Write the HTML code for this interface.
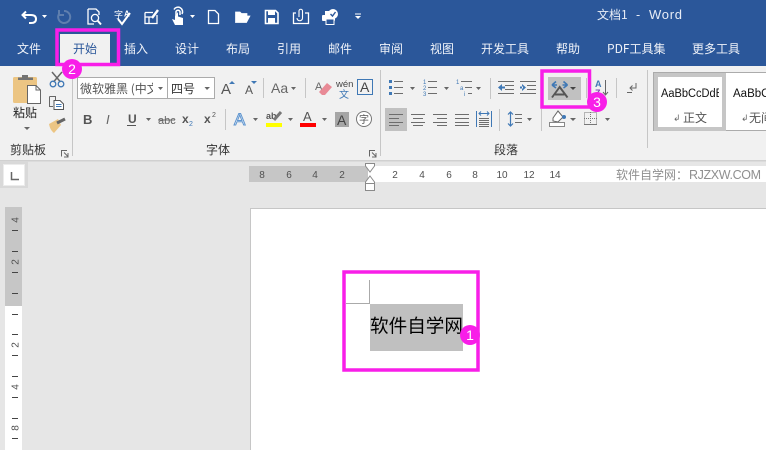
<!DOCTYPE html>
<html lang="zh"><head><meta charset="utf-8"><title>文档1 - Word</title>
<style>
html,body{margin:0;padding:0;width:766px;height:450px;overflow:hidden;background:#e6e6e6}
svg{display:block}
text{font-family:"Liberation Sans","Noto Sans CJK SC",sans-serif}
.cj{font-family:"Noto Sans CJK SC","Liberation Sans",sans-serif;font-size:12px}
.tab{fill:#f0f3f9;font-family:"Noto Sans CJK SC","Liberation Sans",sans-serif;font-size:12px}
.lb{fill:#333;font-family:"Noto Sans CJK SC","Liberation Sans",sans-serif;font-size:12px}
.rn{fill:#505050;font-size:10px;text-anchor:middle}
.w{fill:none;stroke:#fff;stroke-width:1.3}
.g{fill:none;stroke:#666;stroke-width:1}
.b{fill:none;stroke:#3f78b5;stroke-width:1.3}
.ln{stroke:#6d6d6d;stroke-width:1;fill:none}
.sp{stroke:#c6c6c6;stroke-width:1}
.ar{fill:#666}
.m{fill:none;stroke:#f81ee8;stroke-width:3.5}
.bd{fill:#f81ee8}
.bt{fill:#fff;font-size:14px;text-anchor:middle}
</style></head><body>
<svg width="766" height="450" viewBox="0 0 766 450" xmlns="http://www.w3.org/2000/svg">
<rect width="766" height="450" fill="#e6e6e6"/>
<!-- title / tabs -->
<rect width="766" height="66" fill="#2b579a"/>
<rect x="60" y="34" width="50" height="32" fill="#f1f1f1"/>
<!-- ribbon -->
<rect y="66" width="766" height="94" fill="#f1f1f1"/>
<rect y="160" width="766" height="1.5" fill="#d0d0d0"/>

<!-- QAT -->
<path d="M26 11.5 L22.5 15 L26 18.5 M23 15 H31 Q36 15 36 19 Q36 23 31 23 H29" fill="none" stroke="#fff" stroke-width="2"/>
<polygon points="42,15 47,15 44.5,18" fill="#fff"/>
<path d="M64 11 A6 6 0 1 1 59 14 M59 10 V15 H64" fill="none" stroke="#5f7fae" stroke-width="2"/>
<path class="w" d="M88 9 H96 L99 12 V15 M88 9 V24 H94"/>
<circle class="w" cx="95" cy="18" r="3.6" stroke-width="1.6"/><path d="M97.5 20.5 L101 24.5" stroke="#fff" stroke-width="2"/>
<text x="114" y="18" fill="#fff" class="cj" style="font-size:9px">字</text>
<text x="124" y="16.5" fill="#fff" font-size="8" font-weight="bold">A</text>
<path d="M118 19 L122 24 L130 13" fill="none" stroke="#fff" stroke-width="2"/>
<path class="w" d="M145 12.5 H153 M145 12.5 V23.5 H157 V15 M149 23 V17 M145 17 H152"/>
<path d="M152 18 L158 10" stroke="#fff" stroke-width="2.4"/>
<path d="M176 17 V11.5 A2.2 2.2 0 0 1 180 11.5 V15 M174 9.5 A4.5 4.5 0 1 1 182 14" fill="none" stroke="#fff" stroke-width="1.5"/>
<path d="M175 16 V20 L172 19 L175 25 H183 V18 L178 16.5 V12" fill="#fff"/>
<polygon points="190,15 195,15 192.5,18" fill="#fff"/>
<path class="w" d="M208.5 10.5 H215 L218.5 14 V23.5 H208.5 Z"/>
<path d="M235.5 22.5 V12 H240 L241.5 13.5 H247 V16 M235.5 22.5 L239 16 H250 L246.5 22.5 Z" fill="#fff" stroke="#fff" stroke-width=".7"/>
<path d="M265.5 10.5 H275.5 L278 13 V23.5 H265.5 Z" fill="none" stroke="#fff" stroke-width="1.6"/>
<rect x="268" y="11" width="7" height="4" fill="#fff"/><rect x="268" y="18" width="7" height="5" fill="#fff"/>
<path class="w" d="M296 13 H293.500 V23.500 H308.500 V13 H305"/>
<path d="M299 17 V11 A1.7 1.7 0 0 1 302.5 11 V18 A2.6 2.6 0 0 1 297 18" fill="none" stroke="#fff" stroke-width="1.1"/>
<rect x="322" y="15" width="13" height="6" rx="1" fill="#fff"/><rect x="326" y="19" width="8" height="5.5" fill="#2b579a" stroke="#fff"/>
<rect x="325" y="11" width="6" height="4" fill="#fff"/>
<circle cx="333" cy="14" r="5" fill="#fff"/><path d="M330.5 14 L332.5 16 L335.5 12" fill="none" stroke="#2b579a" stroke-width="1.4"/>
<path d="M355 14 H361" stroke="#fff" stroke-width="1"/><polygon points="355,16 361,16 358,19" fill="#fff"/>

<text x="597" y="19" fill="#e8edf6" class="cj" style="font-size:12px">文档1</text>
<text x="636" y="19" fill="#e8edf6" style="font-size:12.5px">-</text>
<text x="649" y="19" fill="#e8edf6" style="font-size:13px" textLength="33">Word</text>

<!-- tabs -->
<text class="tab" x="17" y="53">文件</text>
<text class="tab" x="73" y="53" style="fill:#2b579a">开始</text>
<text class="tab" x="124" y="53">插入</text>
<text class="tab" x="175" y="53">设计</text>
<text class="tab" x="226" y="53">布局</text>
<text class="tab" x="277" y="53">引用</text>
<text class="tab" x="328" y="53">邮件</text>
<text class="tab" x="379" y="53">审阅</text>
<text class="tab" x="430" y="53">视图</text>
<text class="tab" x="481" y="53">开发工具</text>
<text class="tab" x="556" y="53">帮助</text>
<text class="tab" x="607" y="53">PDF工具集</text>
<text class="tab" x="692" y="53">更多工具</text>

<!-- clipboard group -->
<rect x="13" y="77" width="24" height="26" rx="1.5" fill="#ecc583"/>
<path d="M18 80 V77.5 H22 V75 H28 V77.5 H33 V80 Z" fill="#737373"/>
<path d="M27.5 85.5 H36 L40.5 90 V103.5 H27.5 Z" fill="#fff" stroke="#666"/>
<path d="M36 85.5 V90 H40.5" fill="none" stroke="#666"/>
<text class="lb" x="13" y="117" style="fill:#222">粘贴</text>
<polygon points="24,127 30,127 27,130" class="ar"/>
<path d="M52 72 L60.500 82 M62 72 L53.500 82" stroke="#666" stroke-width="1.500"/>
<circle class="b" cx="53" cy="84" r="2.800"/><circle class="b" cx="61" cy="84" r="2.800"/>
<path class="g" d="M49.5 96.5 H55.5 V100 M49.5 96.5 V106.5 H53"/>
<path d="M54 100.5 H60 L63.5 104 V109.5 H54 Z" fill="#fff" stroke="#555"/>
<path d="M56 104.5 H61.5 M56 106.5 H61.5" stroke="#3f78b5"/>
<path d="M49 124 L58 119 L61 125 L54 133 Q50 130 49 124Z" fill="#ecc583"/>
<path d="M57 123 L65 119" stroke="#666" stroke-width="3"/>
<text class="lb" x="10" y="154">剪贴板</text>
<path class="g" d="M61.5 156.5 V150.5 H67 M64 152.5 L68 156.5 M68 153 V157 H64" stroke="#888"/>
<line class="sp" x1="72.5" y1="70" x2="72.5" y2="156"/>

<!-- font group -->
<rect x="77.5" y="77.5" width="90" height="21" fill="#fff" stroke="#ababab"/>
<rect x="167.5" y="77.5" width="47" height="21" fill="#fff" stroke="#ababab"/>
<svg x="80" y="78" width="73" height="20"><text x="0" y="15" style="font-family:'Noto Sans CJK SC',sans-serif;font-size:12px" fill="#555">微软雅黑 (中文</text></svg>
<polygon points="158,87 163,87 160.500,90" class="ar"/>
<text class="lb" x="171" y="93">四号</text>
<polygon points="204.500,87 210,87 207,90" class="ar"/>
<text x="221" y="94" fill="#555" font-size="15">A</text><polygon points="229,84 235,84 232,81" fill="#3f78b5"/>
<text x="245" y="94" fill="#555" font-size="12">A</text><polygon points="251,81 257,81 254,84" fill="#3f78b5"/>
<line class="sp" x1="263.500" y1="78" x2="263.500" y2="98"/>
<text x="271" y="93" fill="#666" font-size="14">Aa</text>
<polygon points="291,87 296,87 293.500,90" class="ar"/>
<line class="sp" x1="305.500" y1="78" x2="305.500" y2="98"/>
<text x="315" y="90" fill="#666" font-size="11">A</text>
<path d="M319 92 L327 83 L332 87 L325 95 H322 Z" fill="#e88a96"/>
<text x="336" y="87" fill="#444" font-size="9.500">wén</text>
<text x="339" y="98" class="cj" style="font-size:10px" fill="#3f78b5">文</text>
<rect x="357.500" y="79.500" width="15" height="15" fill="none" stroke="#3f78b5"/>
<text x="360" y="92" fill="#444" font-size="14">A</text>

<text x="83" y="124" fill="#555" font-size="13" font-weight="bold">B</text>
<text x="106" y="124" fill="#666" font-size="13" font-style="italic">I</text>
<text x="128" y="123" fill="#555" font-size="12" font-weight="bold">U</text>
<line x1="127" y1="125.500" x2="136" y2="125.500" stroke="#555"/>
<polygon points="146,118 151,118 148.500,121" class="ar"/>
<text x="158" y="124" fill="#666" font-size="11">abc</text><line x1="158" y1="120" x2="175" y2="120" stroke="#666"/>
<text x="182" y="123" fill="#555" font-size="12" font-weight="bold">x</text><text x="189" y="126" fill="#3f78b5" font-size="7">2</text>
<text x="204" y="123" fill="#555" font-size="12" font-weight="bold">x</text><text x="212" y="117" fill="#555" font-size="7">2</text>
<line class="sp" x1="225.500" y1="109" x2="225.500" y2="130"/>
<text x="234" y="125" font-size="17" fill="#fff" stroke="#5f95cf" stroke-width="1">A</text>
<polygon points="253,118 258,118 255.500,121" class="ar"/>
<text x="266" y="119" fill="#555" font-size="9" font-weight="bold">ab</text>
<path d="M274 120 L281 112" stroke="#777" stroke-width="3"/>
<rect x="266" y="123" width="16" height="4" fill="#ff0"/>
<polygon points="288,118 293,118 290.500,121" class="ar"/>
<text x="303" y="121" fill="#555" font-size="13">A</text>
<rect x="300" y="123" width="16" height="4" fill="#f00"/>
<polygon points="322,118 327,118 324.500,121" class="ar"/>
<rect x="335" y="112" width="14" height="15" fill="#a6a6a6"/><text x="337" y="125" fill="#444" font-size="14">A</text>
<circle cx="364" cy="119" r="7.500" fill="#fff" stroke="#777"/>
<text x="359" y="123" class="cj" style="font-size:10px" fill="#555">字</text>
<text class="lb" x="206" y="154">字体</text>
<path class="g" d="M369.500 156.500 V150.500 H375 M372 152.500 L376 156.500 M376 153 V157 H372" stroke="#888"/>
<line class="sp" x1="380.500" y1="70" x2="380.500" y2="156"/>

<!-- paragraph group -->
<g fill="#3f78b5"><rect x="389" y="80" width="3" height="3"/><rect x="389" y="86" width="3" height="3"/><rect x="389" y="92" width="3" height="3"/></g>
<path class="ln" d="M394 81.500 H403 M394 87.500 H403 M394 93.500 H403"/>
<polygon points="410,87 415,87 412.500,90" class="ar"/>
<text x="423" y="84" fill="#3f78b5" font-size="6">1</text><text x="423" y="90" fill="#3f78b5" font-size="6">2</text><text x="423" y="96" fill="#3f78b5" font-size="6">3</text>
<path class="ln" d="M428 81.500 H437 M428 87.500 H437 M428 93.500 H437"/>
<polygon points="444,87 449,87 446.500,90" class="ar"/>
<text x="456" y="84" fill="#3f78b5" font-size="6">1</text><text x="460" y="90" fill="#3f78b5" font-size="6">a</text><text x="464" y="96" fill="#3f78b5" font-size="6">i</text>
<path class="ln" d="M461 81.500 H472 M465 87.500 H472 M468 93.500 H472"/>
<polygon points="476,87 481,87 478.500,90" class="ar"/>
<line class="sp" x1="490.500" y1="78" x2="490.500" y2="99"/>
<path class="ln" d="M498 81.500 H514 M505 85.500 H514 M505 89.500 H514 M498 93.500 H514"/>
<path d="M498 87.500 L502 84 V91 Z M501 86.500 H505 V88.500 H501Z" fill="#3f78b5"/>
<path class="ln" d="M520 81.500 H536 M527 85.500 H536 M527 89.500 H536 M520 93.500 H536"/>
<path d="M526 87.500 L522 84 V91 Z M520 86.500 H523 V88.500 H520Z" fill="#3f78b5"/>

<rect x="385" y="108" width="22" height="23" fill="#c1c1c1"/>
<path class="ln" d="M389 114.500 H403 M389 118.500 H399 M389 122.500 H403 M389 125.500 H399"/>
<path class="ln" d="M411 114.500 H425 M413 118.500 H423 M411 122.500 H425 M413 125.500 H423"/>
<path class="ln" d="M433 114.500 H447 M437 118.500 H447 M433 122.500 H447 M437 125.500 H447"/>
<path class="ln" d="M455 114.500 H469 M455 118.500 H469 M455 122.500 H469 M455 125.500 H469"/>
<path d="M476.500 111 V127 M491.500 111 V127 M479 113.500 H489 M481 111.500 L479 113.500 L481 115.500 M487 111.500 L489 113.500 L487 115.500" fill="none" stroke="#3f78b5"/>
<path class="ln" d="M479 118.500 H489 M479 120.500 H489 M479 122.500 H489 M479 124.500 H489 M479 126.500 H489"/>
<line class="sp" x1="499.500" y1="109" x2="499.500" y2="131"/>
<path d="M510.500 112 V126 M508 114.500 L510.500 112 L513 114.500 M508 123.500 L510.500 126 L513 123.500" fill="none" stroke="#3f78b5" stroke-width="1.200"/>
<path class="ln" d="M515 114.500 H522 M515 118.500 H522 M515 122.500 H522"/>
<polygon points="527,118 532,118 529.500,121" class="ar"/>
<line class="sp" x1="541.500" y1="109" x2="541.500" y2="131"/>
<path d="M553 118 L558 111 L563 117 L558 122 L553 121Z" fill="#fff" stroke="#666"/>
<circle cx="564" cy="117" r="2" fill="#3f78b5"/>
<rect x="549.500" y="122.500" width="15" height="4" fill="#fff" stroke="#888"/>
<polygon points="570,118 576,118 573,121" class="ar"/>
<rect x="584.500" y="112.500" width="12" height="12" fill="none" stroke="#777" stroke-dasharray="1 1"/>
<path d="M590.500 112 V125 M584 118.500 H597" stroke="#777" stroke-dasharray="1 1"/>
<line x1="584" y1="124.500" x2="597" y2="124.500" stroke="#777"/>
<polygon points="605,118 610,118 607.500,121" class="ar"/>
<text class="lb" x="494" y="154">段落</text>
<line class="sp" x1="647.500" y1="70" x2="647.500" y2="148"/>

<!-- highlighted button -->
<rect x="548" y="77" width="33" height="23" fill="#c1c1c1"/>
<path d="M552 85 L556 81.500 M552 85 L556 88 M552 85 H557 M567.500 85 L563.500 81.500 M567.500 85 L563.500 88 M567.500 85 H562.500" fill="none" stroke="#3f78b5" stroke-width="1.600"/>
<path d="M552 97.500 L559.700 87 L567.500 97.500 M555 94.500 H564.500" fill="none" stroke="#555" stroke-width="1.900"/>
<polygon points="570,87 576,87 573,90" fill="#444"/>
<line class="sp" x1="586.500" y1="78" x2="586.500" y2="98"/>
<text x="595" y="87" fill="#3f78b5" font-size="9" font-weight="bold">A</text>
<text x="595" y="96" fill="#7c4daf" font-size="9" font-weight="bold">Z</text>
<path d="M605.500 80 V95 M603 92 L605.500 95 L608 92" fill="none" stroke="#666"/>
<line class="sp" x1="616.500" y1="78" x2="616.500" y2="98"/>
<path class="g" d="M636 83 V88 H630 M632.500 85.500 L630 88 L632.500 90.500 M627 92.500 H632"/>

<!-- styles -->
<rect x="653.500" y="72.500" width="120" height="58" fill="#fff" stroke="#ababab"/>
<rect x="656" y="75" width="68" height="54" fill="none" stroke="#c6c6c6" stroke-width="4"/>
<svg x="661" y="84" width="58" height="16"><text x="0" y="13" font-size="11.500" fill="#111" textLength="62" lengthAdjust="spacingAndGlyphs">AaBbCcDdE</text></svg>
<text x="673" y="121" fill="#666" font-size="9">↲</text>
<text class="lb" x="683" y="122" style="fill:#555">正文</text>
<text x="733" y="97" font-size="11.500" fill="#111">AaBbC</text>
<text x="741" y="121" fill="#666" font-size="9">↲</text>
<text class="lb" x="749" y="122" style="fill:#555">无间</text>

<!-- rulers -->
<rect x="0" y="161" width="28" height="27" fill="#d9d9d9"/>
<rect x="3.500" y="164.500" width="21" height="21" fill="#fff" stroke="#ececec"/>
<path d="M11.500 172 V179.500 H19" fill="none" stroke="#666" stroke-width="1.500"/>
<rect x="249" y="166" width="119" height="16" fill="#c6c6c6"/>
<rect x="368" y="166" width="398" height="16" fill="#fff"/>
<g>
<text class="rn" x="262" y="178">8</text><text class="rn" x="289" y="178">6</text><text class="rn" x="315" y="178">4</text><text class="rn" x="342" y="178">2</text>
<text class="rn" x="395" y="178">2</text><text class="rn" x="422" y="178">4</text><text class="rn" x="449" y="178">6</text><text class="rn" x="475" y="178">8</text>
<text class="rn" x="502" y="178">10</text><text class="rn" x="529" y="178">12</text><text class="rn" x="555" y="178">14</text>
</g>
<path d="M365.500 163.500 H374.500 V166 L370 172 L365.500 166 Z" fill="#fff" stroke="#8a8a8a"/>
<path d="M370 176 L374.500 182 V190.500 H365.500 V182 Z" fill="#fff" stroke="#8a8a8a"/>
<line x1="365.500" y1="183.500" x2="374.500" y2="183.500" stroke="#8a8a8a"/>
<text x="616" y="179" class="cj" fill="#8f8f8f" style="font-size:12px">软件自学网：</text>
<text x="689" y="179" fill="#8f8f8f" font-size="12.500" textLength="72">RJZXW.COM</text>

<rect x="5" y="207" width="17" height="99" fill="#c6c6c6"/>
<rect x="5" y="306" width="17" height="144" fill="#fff"/>
<path d="M12 230.500 H18 M12 251.500 H18 M12 272.500 H18 M12 293.500 H18 M12 314.500 H18 M12 334.500 H18 M12 355.500 H18 M12 376.500 H18 M12 397.500 H18 M12 418.500 H18 M12 438.500 H18" stroke="#444" stroke-width="1"/>
<text class="rn" transform="translate(18.500,220) rotate(-90)" x="0" y="0">4</text>
<text class="rn" transform="translate(18.500,262) rotate(-90)" x="0" y="0">2</text>
<text class="rn" transform="translate(18.500,345) rotate(-90)" x="0" y="0">2</text>
<text class="rn" transform="translate(18.500,387) rotate(-90)" x="0" y="0">4</text>
<text class="rn" transform="translate(18.500,428) rotate(-90)" x="0" y="0">8</text>

<!-- page -->
<rect x="250.500" y="208.500" width="530" height="260" fill="#fff" stroke="#c6c6c6"/>
<path d="M369.500 280 V303.500 H346" fill="none" stroke="#aaa"/>
<rect x="370" y="304" width="93" height="47" fill="#c0c0c0"/>
<text x="370" y="332.500" style="font-family:'Noto Sans CJK SC',sans-serif;font-size:18.600px;font-weight:400" fill="#000">软件自学网</text>

<!-- annotations -->
<rect class="m" x="57" y="30" width="61.500" height="34.500"/>
<rect class="m" x="542" y="71" width="47.500" height="36"/>
<rect class="m" x="344" y="272" width="134" height="98"/>
<circle class="bd" cx="72" cy="69" r="10"/><text class="bt" x="72" y="74">2</text>
<circle class="bd" cx="597" cy="102" r="10"/><text class="bt" x="597" y="107">3</text>
<circle class="bd" cx="470" cy="335" r="10"/><text class="bt" x="470" y="340">1</text>
</svg>
</body></html>
